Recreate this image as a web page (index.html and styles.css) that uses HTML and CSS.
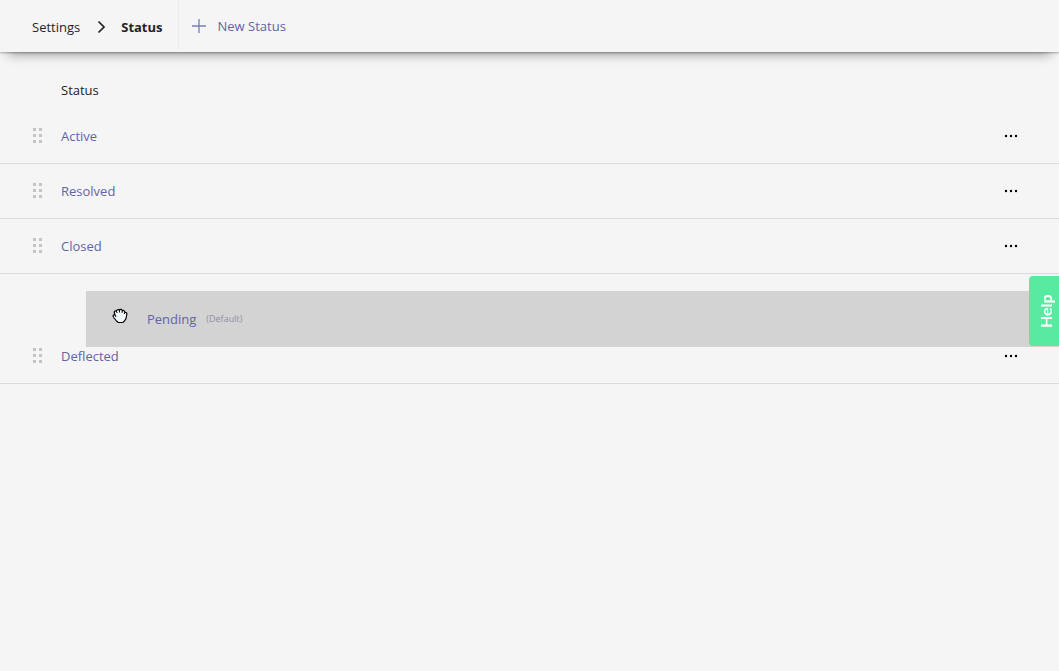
FILE: index.html
```html
<!DOCTYPE html>
<html lang="en">
<head>
    <meta charset="UTF-8">
    <meta name="viewport" content="width=device-width, initial-scale=1.0">
    <title>Status</title>
    <link rel="stylesheet" href="styles.css">
</head>
<body>
    <!-- shared icons -->
    <svg class="icon-defs" width="0" height="0">
        <symbol id="grip" viewBox="0 0 10 16">
            <path d="M0 0h3v3H0zM6 0h3v3H6zM0 6h3v3H0zM6 6h3v3H6zM0 12h3v3H0zM6 12h3v3H6z" fill="#c4c4c4"/>
        </symbol>
        <symbol id="dots" viewBox="0 0 14 4">
            <circle cx="2" cy="2" r="1.2"/>
            <circle cx="7" cy="2" r="1.2"/>
            <circle cx="12" cy="2" r="1.2"/>
        </symbol>
    </svg>

    <header class="toolbar">
        <nav class="breadcrumb">
            <a class="crumb" href="#">Settings</a>
            <svg class="chevron" width="9" height="14" viewBox="0 0 9 14"><path d="M2.500 1.500L8 7l-5.500 5.500" fill="none" stroke="#252423" stroke-width="1.700"/></svg>
            <span class="current">Status</span>
        </nav>
        <button class="new-status" type="button">
            <svg width="14" height="14" viewBox="0 0 14 14"><path d="M7 0v14M0 7h14" stroke="#7a7cb8" stroke-width="1.300"/></svg>
            New Status
        </button>
    </header>

    <main>
        <h2 class="list-title">Status</h2>
        <ul class="status-list">
            <li class="row">
                <button class="handle" type="button" aria-label="Move Active"><svg width="10" height="16"><use href="#grip"/></svg></button>
                <a class="name" href="#">Active</a>
                <button class="more" type="button" aria-label="More options"><svg width="14" height="4"><use href="#dots"/></svg></button>
            </li>
            <li class="row">
                <button class="handle" type="button" aria-label="Move Resolved"><svg width="10" height="16"><use href="#grip"/></svg></button>
                <a class="name" href="#">Resolved</a>
                <button class="more" type="button" aria-label="More options"><svg width="14" height="4"><use href="#dots"/></svg></button>
            </li>
            <li class="row">
                <button class="handle" type="button" aria-label="Move Closed"><svg width="10" height="16"><use href="#grip"/></svg></button>
                <a class="name" href="#">Closed</a>
                <button class="more" type="button" aria-label="More options"><svg width="14" height="4"><use href="#dots"/></svg></button>
            </li>
            <!-- empty slot, its row is being dragged -->
            <li class="row slot">
                <div class="dragged">
                    <svg class="hand" width="16" height="16" viewBox="0 0 16 16">
                        <path d="M4.500 13L1.700 9.500C.6 8 1 6.500 2.500 6.800L3 7 2.300 4.500C2 3 3.300 2.300 4.400 3.200 4.500 1.700 6.200 1 7.200 2.200 8.200.8 10 1.200 10.300 2.700 11.600 2 12.800 2.800 12.800 4.300 14.200 4 15 5 14.800 6.500L14 10.500 12.500 13 11 14.500H6.200z" fill="#f2f9fc" stroke="#000" stroke-width="1.200"/>
                        <path d="M3 7l1 2M4.600 3.500l.6 1.500M7.300 2.500l.3 2M10.300 3L10 4.800M12.700 4.500L12.300 6" fill="none" stroke="#000"/>
                    </svg>
                    <a class="name" href="#">Pending</a>
                    <span class="default">(Default)</span>
                </div>
            </li>
            <li class="row">
                <button class="handle" type="button" aria-label="Move Deflected"><svg width="10" height="16"><use href="#grip"/></svg></button>
                <a class="name" href="#">Deflected</a>
                <button class="more" type="button" aria-label="More options"><svg width="14" height="4"><use href="#dots"/></svg></button>
            </li>
        </ul>
    </main>

    <button class="help" type="button">Help</button>
</body>
</html>
```
FILE: styles.css
```css
body {
    margin: 0;
    min-height: 100vh;
    background-color: #f5f5f5;
    color: #252423;
    font-family: "Segoe UI", "Open Sans", "Noto Sans", sans-serif;
    font-size: 13px;
    line-height: 20px;
}
a {
    color: #6264a7;
    text-decoration: none;
}
button {
    padding: 0;
    border: none;
    background: none;
    font: inherit;
    cursor: pointer;
}
svg {
    display: block;
}
.icon-defs {
    position: absolute;
}

/* top bar */
.toolbar {
    display: flex;
    height: 52px;
    box-shadow: 0 10px 12px -8px rgba(0, 0, 0, 0.4), 0 1px 2px rgba(0, 0, 0, 0.3);
}
.breadcrumb {
    display: flex;
    align-items: center;
    gap: 16px;
    margin-bottom: 2px;
    padding: 4px 15px 0 32px;
    border-right: 1px solid #ebebeb;
}
.crumb {
    color: #252423;
}
.current {
    font-weight: bold;
}
.new-status {
    display: flex;
    align-items: center;
    gap: 12px;
    padding: 0 13px;
    color: #6264a7;
}

/* status list */
.list-title {
    margin: 28px 0 9px 61px;
    font-size: 13px;
    font-weight: normal;
}
.status-list {
    margin: 0;
    padding: 0;
    list-style: none;
}
.row {
    display: flex;
    align-items: center;
    box-sizing: border-box;
    height: 55px;
    padding: 0 41px 0 33px;
    border-bottom: 1px solid #dcdcdc;
}
.handle {
    margin-right: 18px;
    cursor: grab;
}
.more {
    margin-left: auto;
    padding: 8px 0;
}
.slot {
    position: relative;
    border-color: transparent;
}
.dragged {
    position: absolute;
    top: 17px;
    left: 86px;
    right: 0;
    display: flex;
    align-items: center;
    box-sizing: border-box;
    height: 56px;
    padding-left: 26px;
    background-color: #d3d3d3;
    cursor: grabbing;
}
.hand {
    margin: 0 19px 6px 0;
}
.default {
    margin-left: 10px;
    color: #8f8fa3;
    font-size: 9px;
}

/* help tab on the right edge */
.help {
    position: fixed;
    top: 276px;
    right: 0;
    box-sizing: border-box;
    width: 30px;
    height: 70px;
    padding-right: 4px;
    border-radius: 0 4px 4px 0;
    background-color: #58eb9f;
    color: #fff;
    font-family: Lato, Roboto, sans-serif;
    font-size: 16px;
    font-weight: bold;
    writing-mode: vertical-rl;
    transform: rotate(180deg);
}
```
